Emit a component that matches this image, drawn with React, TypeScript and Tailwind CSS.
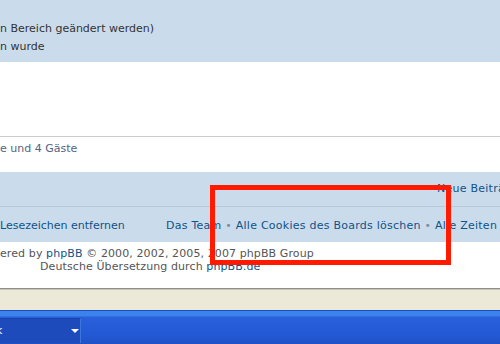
import React from "react";

export default function App() {
  const font = { fontFamily: '"DejaVu Sans", Verdana, sans-serif' };
  return (
    <div
      className="relative w-[500px] h-[344px] overflow-hidden bg-white flex flex-col"
      style={font}
    >
      {/* top blue panel */}
      <div className="h-[62px] shrink-0 bg-[#cadceb] pt-[20px] text-[11px] leading-[18px] text-[#333333] whitespace-nowrap">
        <div>n Bereich geändert werden)</div>
        <div>n wurde</div>
      </div>

      {/* white area */}
      <div className="h-[74px] shrink-0 bg-white" />
      <div className="h-px shrink-0 bg-[#cccccc]" />
      <div className="h-[35px] shrink-0 pt-[3px] text-[11px] leading-[18px] text-[#536482] whitespace-nowrap">
        e und 4 Gäste
      </div>

      {/* navbar */}
      <div className="h-[70px] shrink-0 bg-[#cadceb] flex flex-col text-[11px] leading-[18px] text-[#105289] whitespace-nowrap overflow-hidden">
        <div className="h-[34px] pt-[8px] pl-[437px] tracking-[0.25px]">Neue Beiträge</div>
        <div className="h-px bg-[#b9c9da]" />
        <div className="flex pt-[10px]">
          <div className="w-[166px] shrink-0">Lesezeichen entfernen</div>
          <div className="shrink-0 tracking-[0.25px]">
            Das Team <span className="text-[#7d8ea4]">•</span> Alle Cookies des Boards löschen{" "}
            <span className="text-[#7d8ea4]">•</span> Alle Zeiten sind UTC
          </div>
        </div>
      </div>

      {/* footer */}
      <div className="h-[46px] shrink-0 pt-[5px] text-[11px] leading-[13px] text-[#555555] whitespace-nowrap tracking-[0.1px]">
        <div>
          ered by <span className="text-[#105289]">phpBB</span> © 2000, 2002, 2005, 2007 phpBB Group
        </div>
        <div className="pl-[40px]">
          Deutsche Übersetzung durch <span className="text-[#105289]">phpBB.de</span>
        </div>
      </div>

      {/* browser status bar */}
      <div className="h-px shrink-0 bg-[#8e8d86]" />
      <div className="h-[21px] shrink-0 bg-[#ece9d8] border-t border-[#c9c6b8]" />

      {/* taskbar */}
      <div className="flex-1 flex flex-col bg-[#2459d6]">
        <div className="h-px bg-[#1d4ebf]" />
        <div className="h-[5px] bg-[#3c83ee]" />
        <div className="h-px bg-[#3070e2]" />
        <div className="flex-1 flex items-end bg-[linear-gradient(to_bottom,#2a60da,#2358d4_70%,#1f50c4)]">
          <div className="w-[81px] h-[25px] mb-[1px] bg-[#1d4bbb] border-r border-[#3d74dd] border-t border-t-[#1844aa] flex items-center justify-between pr-[1px]">
            <span className="text-white text-[11px] -ml-[4px]">k</span>
            <svg width="8" height="5" viewBox="0 0 8 5">
              <polygon points="0,0 8,0 4,4" fill="#ffffff" />
            </svg>
          </div>
        </div>
      </div>

      {/* red highlight rectangle */}
      <div className="absolute left-[210px] top-[185px] w-[241px] h-[80px] border-[5px] border-[#ff1a00]" />
    </div>
  );
}
